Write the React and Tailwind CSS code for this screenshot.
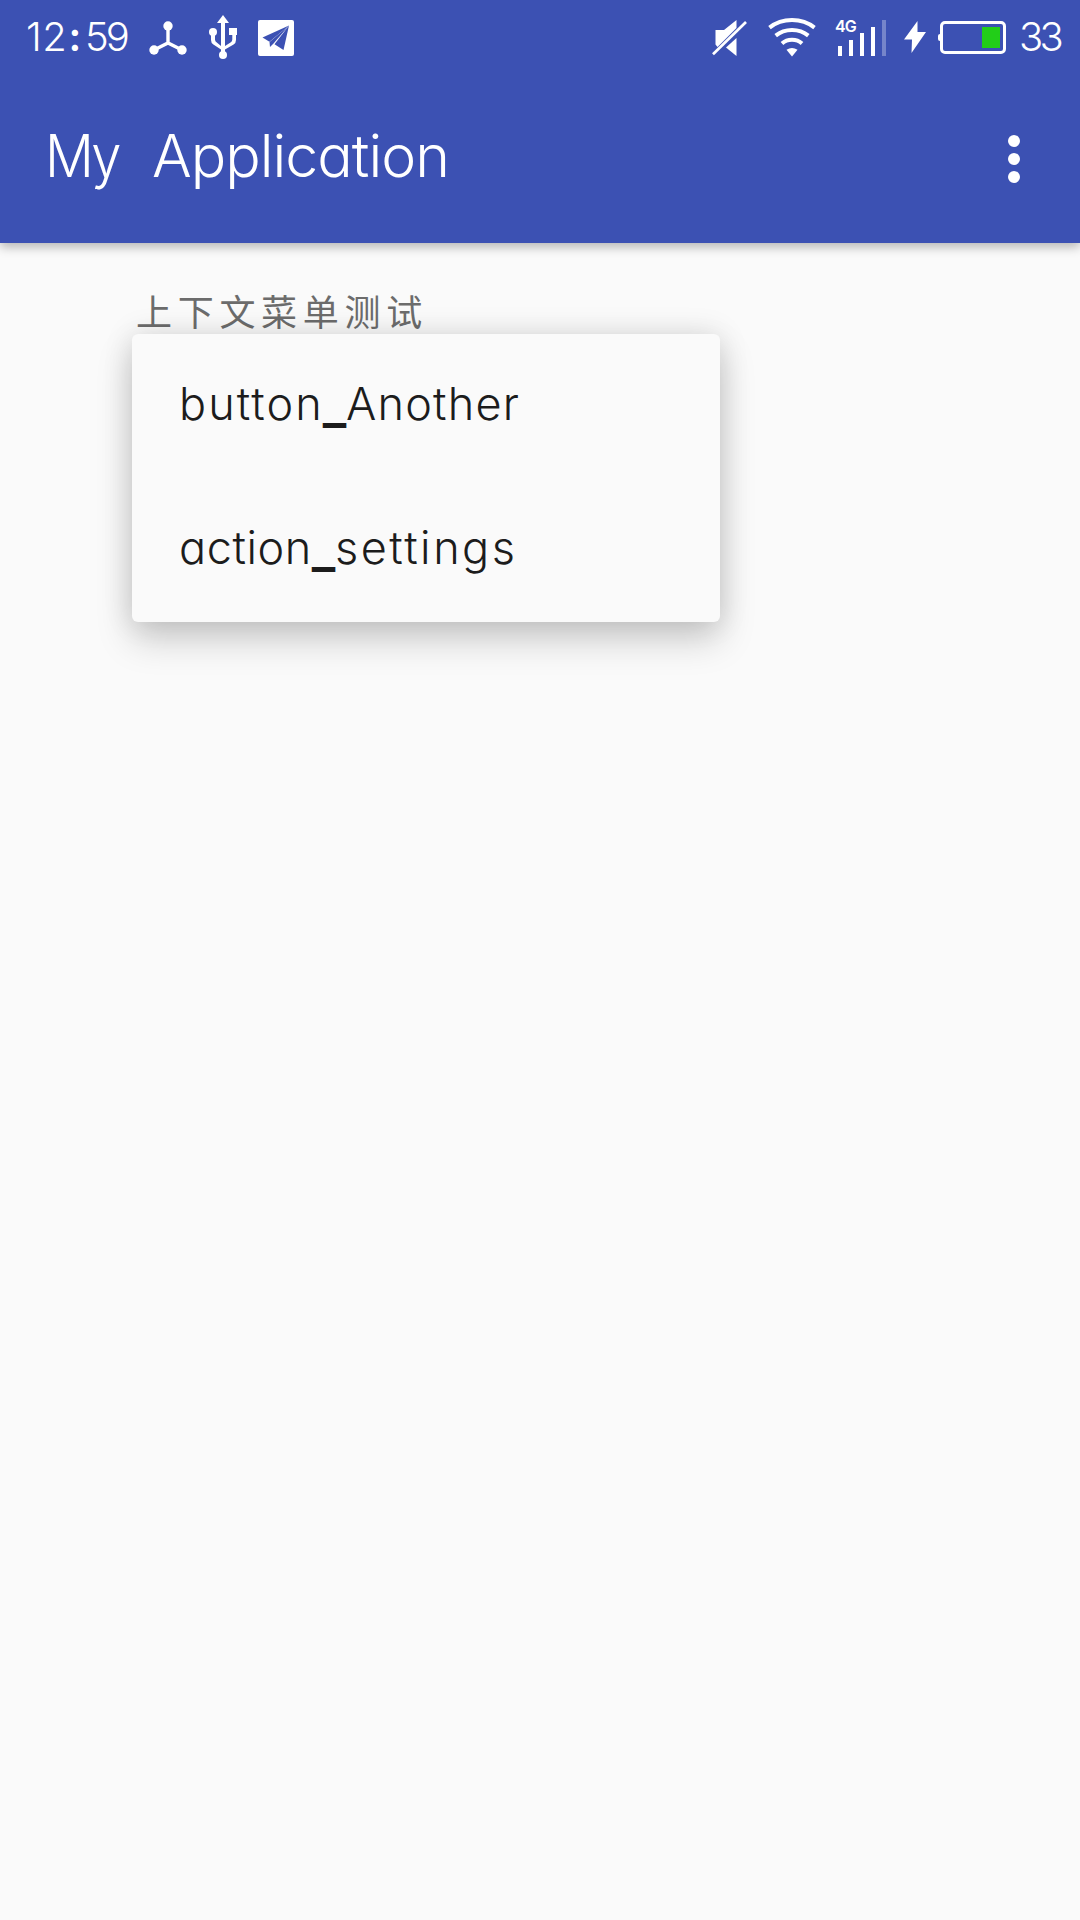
const latin =
  "font-[Inter,'Noto_Sans_CJK_SC',sans-serif] [font-feature-settings:'cv11'_1] whitespace-pre leading-none";

function NetworkIcon() {
  return (
    <svg className="h-[34px] w-[38px]" viewBox="0 0 38 34" fill="#fff">
      <path d="M19 5v17M5 29l14-7 14 7" fill="none" stroke="#fff" strokeWidth="3.4" />
      <circle cx="19" cy="5" r="4.7" />
      <circle cx="5" cy="29" r="4.7" />
      <circle cx="33" cy="29" r="4.7" />
    </svg>
  );
}

function UsbIcon() {
  return (
    <svg className="h-[44px] w-[28px]" viewBox="0 0 28 44" fill="#fff">
      <path d="M14 0l6 8h-4v23l5.5-3.6q1.8-1.2 1.8-3V20H20v-7h8v7h-1v5q0 3-2.4 4.6L16 34.5V38h-4v-3.500l-7.600-4.900Q2 28 2 25v-5h4v4.400q0 1.800 1.800 3L12 31V8H8z" />
      <circle cx="4" cy="17" r="4" />
      <circle cx="14" cy="40" r="4" />
    </svg>
  );
}

function PlaneIcon() {
  return (
    <svg className="h-[36px] w-[36px]" viewBox="0 0 36 36">
      <rect width="36" height="36" rx="2" fill="#fff" />
      <path d="M31 5.5L4.5 17.5l7 4.3z" fill="#3c51b3" />
      <path d="M31 5.5L11.5 22l.5 5 3.500-3.500z" fill="#3c51b3" />
      <path d="M31 5.5L16.5 24.300 25.500 30z" fill="#3c51b3" />
    </svg>
  );
}

function MuteIcon() {
  return (
    <svg className="h-[36px] w-[35px]" viewBox="0 0 35 36" fill="#fff">
      <path d="M3.500 10h8.500L24.500 0v8L5.500 27l-2-2.500z" />
      <path d="M24.500 18v18L14 27.500z" />
      <path d="M1 34.300L34 2" fill="none" stroke="#fff" strokeWidth="2.700" />
    </svg>
  );
}

function WifiIcon() {
  return (
    <svg className="h-[40px] w-[48px]" viewBox="0 0 48 40" fill="none" stroke="#fff" strokeWidth="4">
      <path d="M1.500 10.600Q11 3 24 3t22.500 7.600" />
      <path d="M7.700 18.600Q14.500 13 24 13t16.300 5.600" />
      <path d="M14 26.500Q18 22.800 24 22.800t10 3.700" />
      <path d="M18.500 32.800Q24 29 29.500 32.800L24 39.500z" fill="#fff" stroke="none" />
    </svg>
  );
}

function SignalIcon() {
  return (
    <div className="relative h-[36px] w-[50px]">
      <div className="flex h-full items-end justify-between pl-[2px]">
        <i className="h-[10px] w-[4px] bg-white" />
        <i className="h-[16px] w-[4px] bg-white" />
        <i className="h-[23px] w-[4px] bg-white" />
        <i className="h-[29px] w-[4px] bg-white" />
        <i className="h-[36px] w-[4px] bg-white/30" />
      </div>
      <span className="absolute left-[-1px] top-[-2px] font-[Inter,sans-serif] text-[16px] leading-[16px] font-semibold tracking-[-0.8px] text-white">
        4G
      </span>
    </div>
  );
}

function BoltIcon() {
  return (
    <svg className="h-[32px] w-[22px]" viewBox="0 0 22 32" fill="#fff">
      <path d="M13.500 0L0 18.500h8L7.500 32 22 11h-8.500z" />
    </svg>
  );
}

function BatteryIcon() {
  return (
    <div className="flex items-center">
      <i className="h-[7px] w-[2px] rounded-l-[2px] bg-white" />
      <div className="flex h-[33px] w-[66px] justify-end rounded-[5px] border-[3px] border-white p-[3px]">
        <i className="h-full w-[18px] bg-[#22ce18]" />
      </div>
    </div>
  );
}

function StatusBar() {
  return (
    <div className="flex h-[72px] items-start justify-between text-white">
      <div className="flex items-start">
        <div className={`${latin} ml-[26px] mt-[17px] flex w-[123px] text-[40px] font-light`}>
          <span className="w-[39px] tracking-[0.5px]">12</span>
          <span className="w-[20px] text-center font-semibold">:</span>
          <span className="tracking-[-3px]">59</span>
        </div>
        <div className="flex w-[145px] items-start justify-between">
          <div className="mt-[21px]"><NetworkIcon /></div>
          <div className="mt-[15px]"><UsbIcon /></div>
          <div className="mt-[20px]"><PlaneIcon /></div>
        </div>
      </div>
      <div className="flex items-start">
        <div className="mt-[20px]"><MuteIcon /></div>
        <div className="ml-[21px] mt-[17px]"><WifiIcon /></div>
        <div className="ml-[20px] mt-[20px]"><SignalIcon /></div>
        <div className="ml-[18px] mt-[21px]"><BoltIcon /></div>
        <div className="ml-[12px] mt-[21px]"><BatteryIcon /></div>
        <span className={`${latin} ml-[13px] mt-[17px] w-[61px] text-[40px] font-light tracking-[-3.8px]`}>33</span>
      </div>
    </div>
  );
}

function AppBar() {
  return (
    <div className="flex h-[171px] items-start text-white">
      <h1 className={`${latin} ml-[45px] mt-[54px] flex text-[59px] font-light`}>
        <span className="w-[107px] origin-left scale-x-[0.92] tracking-[-3px]">My</span>
        <span className="tracking-[-1px]">Application</span>
      </h1>
      <button className="ml-auto mr-[60px] mt-[63px] flex flex-col gap-[6px]" aria-label="More options">
        <i className="size-[12px] rounded-full bg-white" />
        <i className="size-[12px] rounded-full bg-white" />
        <i className="size-[12px] rounded-full bg-white" />
      </button>
    </div>
  );
}

function MenuItem({ children }) {
  return (
    <div className={`${latin} flex h-[144px] items-center pb-[5px] pl-[47px] font-[350]`}>{children}</div>
  );
}

function Underscore() {
  return <span className="w-[23px] translate-y-[3px] scale-x-110 text-center font-bold">_</span>;
}

function ContextMenu() {
  return (
    <div className="absolute left-[132px] top-[91px] flex h-[288px] w-[588px] flex-col rounded-[6px] bg-[#fafafa] text-[45px] text-[#1c1c1c] shadow-[0_18px_36px_rgba(0,0,0,0.18),0_0_30px_rgba(0,0,0,0.12)]">
      <MenuItem>
        <span className="w-[144px] tracking-[2.1px]">button</span>
        <Underscore />
        <span className="tracking-[1.2px]">Another</span>
      </MenuItem>
      <MenuItem>
        <span className="w-[133px] tracking-[0.6px]">action</span>
        <Underscore />
        <span className="tracking-[2.5px]">settings</span>
      </MenuItem>
    </div>
  );
}

export default function App() {
  return (
    <div className="flex h-[1920px] w-[1080px] flex-col overflow-hidden bg-[#fafafa]">
      <header className="z-10 bg-[#3c51b3] shadow-[0_4px_10px_rgba(0,0,0,0.28)]">
        <StatusBar />
        <AppBar />
      </header>
      <main className="relative flex-1">
        <p className="ml-[136px] mt-[49px] font-['Noto_Sans_CJK_SC',sans-serif] text-[36px] leading-[36px] font-normal tracking-[5.7px] text-[#6c6c6c]">
          上下文菜单测试
        </p>
        <ContextMenu />
      </main>
    </div>
  );
}
